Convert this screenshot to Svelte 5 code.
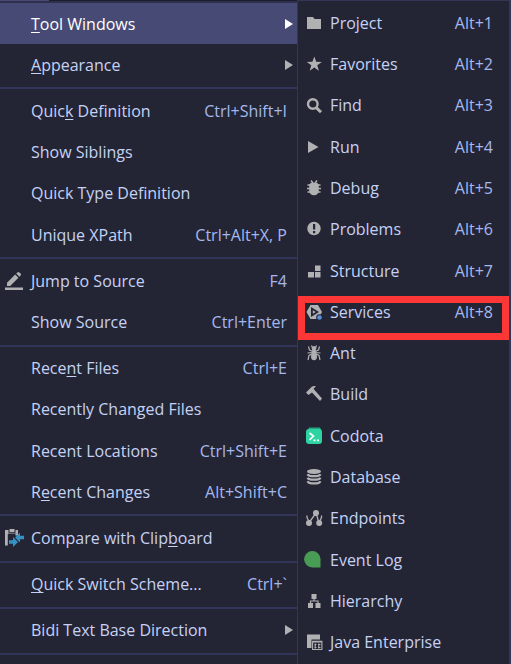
<script>
  // An underscore marks the mnemonic letter that follows it.
  const groups = [
    [
      { label: '_Tool Windows', submenu: true, active: true },
      { label: '_Appearance', submenu: true }
    ],
    [
      { label: 'Quic_k Definition', keys: 'Ctrl+Shift+I' },
      { label: 'Show Siblings' },
      { label: 'Quick Type Definition' },
      { label: 'Unique XPath', keys: 'Ctrl+Alt+X, P' }
    ],
    [
      { label: 'Jump to Source', keys: 'F4', icon: 'edit' },
      { label: 'Show Source', keys: 'Ctrl+Enter' }
    ],
    [
      { label: 'Rece_nt Files', keys: 'Ctrl+E' },
      { label: 'Recently Changed Files' },
      { label: 'Recent Locations', keys: 'Ctrl+Shift+E' },
      { label: 'R_ecent Changes', keys: 'Alt+Shift+C' }
    ],
    [{ label: 'Compare with Clip_board', icon: 'compare' }],
    [{ label: '_Quick Switch Scheme...', keys: 'Ctrl+`' }],
    [{ label: 'Bidi Text Base Direction', submenu: true }]
  ];

  const tools = [
    { label: 'Project', keys: 'Alt+1', icon: 'project' },
    { label: 'Favorites', keys: 'Alt+2', icon: 'star' },
    { label: 'Find', keys: 'Alt+3', icon: 'find' },
    { label: 'Run', keys: 'Alt+4', icon: 'run' },
    { label: 'Debug', keys: 'Alt+5', icon: 'debug' },
    { label: 'Problems', keys: 'Alt+6', icon: 'problems' },
    { label: 'Structure', keys: 'Alt+7', icon: 'structure' },
    { label: 'Services', keys: 'Alt+8', icon: 'services', marked: true },
    { label: 'Ant', icon: 'ant' },
    { label: 'Build', icon: 'build' },
    { label: 'Codota', icon: 'codota' },
    { label: 'Database', icon: 'database' },
    { label: 'Endpoints', icon: 'endpoints' },
    { label: 'Event Log', icon: 'log' },
    { label: 'Hierarchy', icon: 'hierarchy' },
    { label: 'Java Enterprise', icon: 'java' }
  ];

  function split(label) {
    const at = label.indexOf('_');
    return at < 0 ? [label, '', ''] : [label.slice(0, at), label[at + 1], label.slice(at + 2)];
  }
</script>

{#snippet glyph(name)}
  <svg class="icon" viewBox="0 0 20 20" width="20" height="20" aria-hidden="true">
    {#if name === 'edit'}
      <path d="M1 16.5h18v2.5H1z" />
      <path d="M3 15v-3.2l8.2-8.2 3.2 3.2L6.2 15zM12.2 2.6l1.2-1.2q1-.9 2 0l1.2 1.2q.9 1 0 2l-1.2 1.2z" />
    {:else if name === 'compare'}
      <path d="M1 2h3v3.500h9.500V2H14v5.500h-2.500V6H3.800v11.500H1z" />
      <path d="M1 2h3.500v3.800H1zM5.500 1h5v3.300h-5zM11.500 2H14v3.800h-2.500z" />
      <path class="blue" d="M11 9.500l5-5v3.300h4v3.400h-4v3.300zM14 14l-5 5v-3.300H5v-3.400h4V9z" />
    {:else if name === 'project'}
      <path d="M3 4h6l1.500 2H17v10H3z" />
    {:else if name === 'star'}
      <path d="M10.300 2.500l1.900 5.300 5.600.1-4.500 3.400 1.600 5.500-4.600-3.200-4.600 3.200 1.600-5.500-4.500-3.400 5.600-.1z" />
    {:else if name === 'find'}
      <circle class="line" cx="8.800" cy="9" r="4.800" stroke-width="2.400" />
      <path class="line" d="M12.300 12.600l4.700 4.600" stroke-width="3" />
    {:else if name === 'run'}
      <path d="M4 4l10.500 6L4 16z" />
    {:else if name === 'debug'}
      <path class="line" d="M7 2.500l2 2.500M13 2.500L11 5M3.500 7h3M3 10.500h14M3.500 14h3M13.500 7h3M13.500 14h3" stroke-width="1.500" />
      <path d="M7 4.800h6l1.800 2v5.700q-.5 4.800-4.800 4.800t-4.800-4.800V6.800z" />
    {:else if name === 'problems'}
      <circle cx="10" cy="9.500" r="6.700" />
      <path class="ink" d="M9 5h2.200v5.500H9zM9 12h2.200v2.200H9z" />
    {:else if name === 'structure'}
      <path d="M11 4.500h5.500V10H11zM4 11h6v5.500H4zM11 11h5.500v5.500H11z" />
    {:else if name === 'services'}
      <path d="M6.500 3h7.500l4 7-4 7H6.500l-4-7z" />
      <path class="ink" d="M7 5l8 5-8 5z" />
      <path d="M8.800 8.200l3 1.800-3 1.800z" />
      <circle cx="15.500" cy="15.500" r="3.300" class="ink" />
      <circle cx="15.500" cy="15.500" r="2.300" fill="#5c8ee0" />
    {:else if name === 'ant'}
      <ellipse cx="10" cy="13.500" rx="3" ry="3.800" />
      <circle cx="10" cy="8.500" r="2.200" />
      <circle cx="10" cy="5.200" r="2.200" />
      <path class="line" d="M8.500 5L7.500 2.500M11.500 5l1-2.500M9 8.500L5.500 7 4.500 3.500M11 8.500L14.500 7l1-3.500M9 9.500l-5.500.5M11 9.500l5.500.5M8.500 10.500L5 12.500 4 17M11.500 10.500l3.500 2 1 4.500" stroke-width="1.200" />
    {:else if name === 'build'}
      <path d="M2 8.500L7.500 3q2-1.600 4.500-.8L9.500 4.800l.8.900 7.700 8.800-2 2.500-8-8.500L4.500 11z" />
    {:else if name === 'codota'}
      <path d="M5 1.500h11l1.500 3H3.500z" fill="#20a77f" />
      <rect x="2" y="3" width="16" height="15" rx="3" fill="#2ed3a1" />
      <path d="M5.500 7l4 3-4 4M9.500 14.300h2M13 14.300h2" fill="none" stroke="#fff" stroke-width="1.700" />
    {:else if name === 'database'}
      <ellipse cx="10" cy="4.500" rx="7" ry="2.500" />
      <path class="line" d="M3.500 7.200q1 2 6.500 2t6.500-2M3.500 10.700q1 2 6.500 2t6.500-2M3.500 14.200q1 2.200 6.500 2.200t6.500-2.200" stroke-width="2.200" />
    {:else if name === 'endpoints'}
      <circle cx="12" cy="5" r="3" />
      <circle cx="5" cy="15" r="3" />
      <circle cx="15.200" cy="15" r="3" />
      <path class="line" d="M12 5L5.500 14M12 5l3 10M3 7.500v2l2 4" stroke-width="1.300" />
      <path class="line" d="M17.500 7.500v2l-2 4" stroke-width="1.300" />
    {:else if name === 'log'}
      <path d="M16.500 17.500H8.300A8.200 8.200 0 1 1 16.500 9.300z" fill="#499c54" />
    {:else if name === 'hierarchy'}
      <path d="M7.500 3h5v5h-5zM4 12h5v5H4zM11.500 12h5v5h-5z" />
      <path class="line" d="M10 8v2M6.500 12v-2H14v2" stroke-width="1.200" />
    {:else if name === 'java'}
      <path d="M3 2.500h13v5H7.500V16H3z" />
      <path class="line" d="M8.600 9.200h9.300v8.300H8.600zM11.200 11.500v5M14.800 11.500v5M8.600 9.900h9.300M10.500 12.500h2M10.500 15.500h2M14 12.500h2.500M14 15.500h2.500" stroke-width="1.100" />
    {/if}
  </svg>
{/snippet}

{#snippet row(item)}
  {@const parts = split(item.label)}
  <button class="row" class:active={item.active} role="menuitem" aria-haspopup={item.submenu ? 'menu' : undefined}>
    {@render glyph(item.icon)}
    <span class="label">{parts[0]}{#if parts[1]}<u>{parts[1]}</u>{/if}{parts[2]}</span>
    {#if item.keys}<span class="keys">{item.keys}</span>{/if}
    {#if item.submenu}
      <svg class="arrow" viewBox="0 0 8 10" width="8" height="10" aria-hidden="true"><path d="M0 0l8 5-8 5z" /></svg>
    {/if}
    {#if item.marked}<span class="mark"></span>{/if}
  </button>
{/snippet}

<main>
  <div class="menu view" role="menu" aria-label="View">
    <div class="bar"><div class="tab"></div></div>
    {#each groups as group}
      {#each group as item}
        {@render row(item)}
      {/each}
      <hr />
    {/each}
  </div>
  <div class="menu tools" role="menu" aria-label="Tool Windows">
    {#each tools as item}
      {@render row(item)}
    {/each}
  </div>
</main>

<style>
  :global(body) {
    margin: 0;
    background: #242534;
  }
  main {
    display: grid;
    grid-template-columns: 297fr 214fr;
    min-height: 100vh;
    font-family: 'Open Sans', 'Noto Sans', sans-serif;
    font-size: 16px;
    line-height: 20px;
    color: #c5d2f5;
  }
  .menu {
    box-sizing: border-box;
    display: flex;
    flex-direction: column;
    min-width: 0;
  }
  .view {
    padding-bottom: 8px;
  }
  .bar {
    flex: none;
    height: 1px;
    border-bottom: 2px solid #2d2f4c;
    background: #1c1d2a;
  }
  .tab {
    width: 49px;
    height: 1px;
    background: #474a74;
  }
  .tools {
    border: 1px solid #343655;
    border-right-width: 2px;
    border-bottom: 0;
    padding: 1px 0;
  }
  .row {
    position: relative;
    flex: 1 0 auto;
    display: flex;
    align-items: center;
    min-height: 32px;
    margin: 0;
    padding: 0 10px 0 4px;
    border: 0;
    background: none;
    color: inherit;
    font: inherit;
    text-align: left;
    white-space: nowrap;
  }
  .tools .row {
    padding: 0 16px 0 6px;
  }
  .icon {
    flex: none;
    margin-right: 7px;
    fill: #afb1b3;
  }
  .tools .icon {
    margin-right: 6px;
  }
  .line {
    fill: none;
    stroke: #afb1b3;
  }
  .ink {
    fill: #242534;
  }
  .blue {
    fill: #3592c4;
  }
  .label {
    flex: 1;
  }
  u {
    text-decoration-thickness: 1px;
    text-underline-offset: 2px;
  }
  .keys {
    color: #a4b8ee;
  }
  .arrow {
    margin-right: -6px;
    fill: #afb1b3;
  }
  .active {
    background: #474a74;
    color: #fff;
  }
  .active .arrow {
    fill: #fff;
  }
  hr {
    box-sizing: border-box;
    flex: none;
    width: 100%;
    height: 5px;
    margin: 0;
    border: solid #242534;
    border-width: 2px 0 1px;
    background: #32355a;
  }
  .mark {
    position: absolute;
    inset: 5px 0 -7px;
    border: 7px solid #fc3735;
    pointer-events: none;
    z-index: 1;
  }
</style>
